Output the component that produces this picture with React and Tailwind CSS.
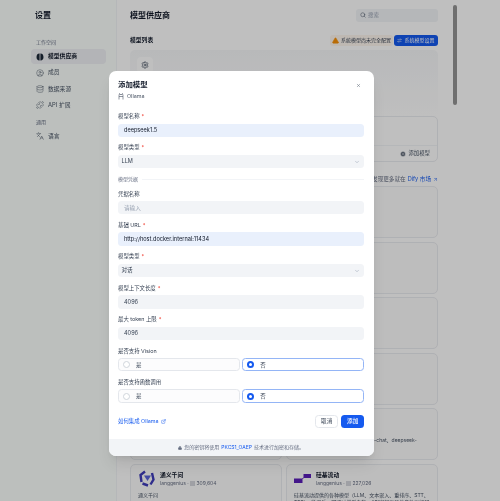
import { CircleUser, Database, Puzzle, Languages, Search, TriangleAlert, ArrowRightLeft, CirclePlus, ArrowUpRight, X, ChevronDown, ExternalLink, Lock, Settings } from "lucide-react";

const font = { fontFamily: '"Inter", "Noto Sans CJK SC", sans-serif' };

function BrainFill({ size }) {
  return (
    <svg width={size} height={size} viewBox="0 0 8 8" fill="#1d2939">
      <path d="M3.6 0.6C2 0.4 0.6 1.6 0.5 4s1.5 3.6 3.1 3.4zM4.4 0.6C6 0.4 7.4 1.6 7.5 4S6 7.6 4.4 7.4z" />
    </svg>
  );
}

function NavItem({ icon: Icon, label, active }) {
  return (
    <div className={`flex items-center gap-[4px] h-[15px] pl-[5px] rounded-[4px] text-[5.8px] ${active ? "bg-[#eff0f4] text-[#101828] font-semibold" : "text-[#495464]"}`}>
      <Icon size={8} strokeWidth={1.4} />
      <span>{label}</span>
    </div>
  );
}

// 弹窗后面的卡片大多被挡住，只保留露出来的内容
function PluginCard({ title, count, desc, icon }) {
  return (
    <div className="h-[52px] rounded-[5px] border border-[#eaecf0] bg-[#fcfcfd] pl-[7px] pr-[6px] pt-[6px] overflow-hidden">
      <div className="flex items-center gap-[5px] h-[16px]">
        <div className="w-[17px] h-[16px] shrink-0 flex items-center justify-center">{icon}</div>
        {title && (
          <div>
            <div className="text-[5.8px] font-semibold text-[#101828] leading-[8px]">{title}</div>
            <div className="text-[5px] text-[#676f83] leading-[8px]">langgenius · ▤ {count}</div>
          </div>
        )}
      </div>
      {desc && <div className="mt-[5.5px] text-[5px] leading-[7px] text-[#495464]">{desc}</div>}
    </div>
  );
}

function Field({ label, required, children }) {
  return (
    <div className="mb-[7.5px]">
      <div className="h-[7px] leading-[7px] mb-[3.5px] text-[5.4px] flex gap-[2px] text-[#354052]">
        <span>{label}</span>
        {required && <span className="text-[#f04438]">*</span>}
      </div>
      {children}
    </div>
  );
}

function Input({ value, blue, muted }) {
  const tone = blue ? "bg-[#e9f0fc] text-[#101828]" : muted ? "bg-[#f2f4f7] text-[#98a2b2]" : "bg-[#f2f4f7] text-[#354052]";
  return (
    <div className={`h-[13.4px] rounded-[3.5px] pl-[6px] flex items-center text-[5.6px] ${tone}`}>
      {value}
    </div>
  );
}

function SelectBox({ value }) {
  return (
    <div className="h-[13.4px] rounded-[3.5px] pl-[3.5px] pr-[4px] flex items-center justify-between bg-[#f2f4f7] text-[5.6px] text-[#354052]">
      {value}
      <ChevronDown size={6} className="text-[#98a2b2]" />
    </div>
  );
}

function Radios() {
  return (
    <div className="grid grid-cols-2 gap-[2.5px]">
      <div className="h-[13.4px] rounded-[3.5px] border-[0.5px] border-[#e4e7ec] bg-[#fcfcfd] flex items-center pl-[4px] gap-[6px] text-[5.4px] text-[#495464]">
        <span className="w-[7px] h-[7px] rounded-full border-[0.5px] border-[#d0d5dc] bg-white" />
        是
      </div>
      <div className="h-[13.4px] rounded-[3.5px] border border-[#94b5f6] bg-white flex items-center pl-[4px] gap-[6px] text-[5.4px] text-[#354052]">
        <span className="w-[7px] h-[7px] rounded-full border-[2px] border-[#155aef] bg-white" />
        否
      </div>
    </div>
  );
}

const hiddenCards = [0, 1, 2, 3, 4, 5, 6, 7, 8];

export default function App() {
  return (
    <div className="relative w-[500px] h-[501px] overflow-hidden bg-white flex blur-[0.35px]" style={font}>
      {/* 侧边栏 */}
      <aside className="w-[117px] shrink-0 h-full bg-[#fbfffd] border-r border-[#f2f4f7] pl-[31px] pr-[10px]">
        <div className="pt-[10px] pl-[4px] h-[38px] text-[8px] font-semibold text-[#101828] leading-[10px]">设置</div>
        <div className="pl-[5px] h-[11px] text-[5px] text-[#676f83] leading-[9px]">工作空间</div>
        <NavItem icon={BrainFill} label="模型供应商" active />
        <div className="mt-[1.3px] flex flex-col gap-[1.3px]">
          <NavItem icon={CircleUser} label="成员" />
          <NavItem icon={Database} label="数据来源" />
          <NavItem icon={Puzzle} label="API 扩展" />
        </div>
        <div className="pl-[5px] mt-[6px] mb-[3px] h-[7px] text-[5px] text-[#676f83] leading-[7px]">通用</div>
        <NavItem icon={Languages} label="语言" />
      </aside>

      {/* 主内容 */}
      <main className="flex-1 min-w-0 pl-[13px] pr-[62px]">
        <div className="h-[31px] flex items-center justify-between pb-[1px]">
          <span className="text-[8px] font-semibold text-[#101828]">模型供应商</span>
          <div className="w-[82px] h-[13px] rounded-[3px] bg-[#f2f4f7] flex items-center pl-[4px] gap-[2px] text-[5.5px] text-[#98a2b2]">
            <Search size={6} className="text-[#495464]" />
            搜索
          </div>
        </div>
        <div className="h-[19px] flex items-center justify-between">
          <span className="text-[5.8px] font-semibold text-[#101828]">模型列表</span>
          <div className="flex items-center gap-[1px]">
            <div className="h-[11.5px] px-[2px] rounded-[3px] bg-[#fef6ee] flex items-center gap-[2px] text-[5px] text-[#354052]">
              <TriangleAlert size={7} className="text-[#f79009] fill-[#f79009]" />
              系统模型尚未完全配置
            </div>
            <div className="h-[11.5px] w-[44px] justify-center rounded-[3px] bg-[#155aef] flex items-center gap-[2px] text-[5px] text-white">
              <ArrowRightLeft size={5} />
              系统模型设置
            </div>
          </div>
        </div>
        <div className="h-[66px] rounded-t-[5px] bg-gradient-to-b from-[#f6f7f9] to-white p-[7px]">
          <div className="w-[16px] h-[16px] rounded-[4px] bg-white flex items-center justify-center">
            <Settings size={8} strokeWidth={2.2} className="text-[#495464]" />
          </div>
        </div>
        <div className="h-[46px] rounded-[5px] border border-[#eaecf0] bg-white flex flex-col justify-end">
          <div className="h-[16px] border-t border-[#f2f4f7] flex items-center justify-end pr-[7px] gap-[2px] text-[5.4px] text-[#495464]">
            <CirclePlus size={6} className="fill-[#495464] text-white" />
            添加模型
          </div>
        </div>
        <div className="h-[24px] flex items-center justify-end text-[5.6px] text-[#676f83] gap-[2px] pt-[10px]">
          <span>发现更多就在</span>
          <span className="text-[#155aef]">Dify 市场</span>
          <ArrowUpRight size={5} className="text-[#155aef]" />
        </div>
        <div className="grid grid-cols-2 gap-x-[4px] gap-y-[3.5px]">
          {hiddenCards.map((i) => (
            <PluginCard key={i} />
          ))}
          <PluginCard desc="DeepSeek 提供模型例如 deepseek-chat、deepseek-coder。" />
          <PluginCard
            title="通义千问"
            count="309,604"
            desc="通义千问"
            icon={
              <svg width="16" height="17" viewBox="0 0 16 17" fill="none">
                <path d="M6 1.5 1.5 5l1 7M13 3l1.5 6.5-3 5M3.5 13.5 9 15.5" stroke="#3f3cbb" strokeWidth="2.4" />
                <path d="M5 5.5h7L8.5 11z" fill="#5a63d8" />
              </svg>
            }
          />
          <PluginCard
            title="硅基流动"
            count="227,026"
            desc="硅基流动提供的各种模型（LLM、文本嵌入、重排序、STT、TTS），微调后，可通过模型名称、API密钥和其他参数进行配置。"
            icon={
              <svg width="17" height="9" viewBox="0 0 17 9">
                <path d="M0 4.5h8L9.5 3.5V0H17v4H10L8.5 5V9H0z" fill="#5a1eb8" />
              </svg>
            }
          />
        </div>
      </main>

      {/* 滚动条 */}
      <div className="absolute right-[43px] top-[5px] w-[4px] h-[100px] rounded-full bg-[#959595]" />

      {/* 遮罩 */}
      <div className="absolute inset-0 bg-black/25" />

      {/* 弹窗 */}
      <div className="absolute left-[108.5px] top-[71px] w-[265.2px] h-[385px] rounded-[7px] bg-white shadow-lg overflow-hidden flex flex-col">
        <div className="flex-1 px-[9.5px] pt-[9px]">
          <div className="flex items-start justify-between">
            <div className="text-[7.4px] font-semibold text-[#101828] leading-[10px]">添加模型</div>
            <X size={5} className="mt-[3px] mr-[3px] text-[#495464]" />
          </div>
          <div className="flex items-center gap-[3px] mt-[2.5px] h-[8px] text-[5.4px] text-[#495464]">
            <svg width="6" height="7" viewBox="0 0 12 14" fill="none" stroke="#495464" strokeWidth="1.2">
              <path d="M2 13V5l1-4 1 2h4l1-2 1 4v8M2 7h8" />
            </svg>
            Ollama
          </div>
          <div className="mt-[12.5px]">
            <Field label="模型名称" required><Input value="deepseek1.5" blue /></Field>
            <Field label="模型类型" required><SelectBox value="LLM" /></Field>
            <div className="flex items-center gap-[4px] h-[7px] mt-[2.6px] mb-[7.8px] text-[5px] text-[#676f83]">
              <span>模型凭据</span>
              <div className="flex-1 h-px bg-[#f2f4f7]" />
            </div>
            <Field label="凭据名称"><Input value="请输入" muted /></Field>
            <Field label="基础 URL" required><Input value="http://host.docker.internal:11434" blue /></Field>
            <Field label="模型类型" required><SelectBox value="对话" /></Field>
            <Field label="模型上下文长度" required><Input value="4096" /></Field>
            <Field label="最大 token 上限" required><Input value="4096" /></Field>
            <Field label="是否支持 Vision"><Radios /></Field>
            <Field label="是否支持函数调用"><Radios /></Field>
          </div>
          <div className="flex items-center justify-between mt-[12px]">
            <div className="flex items-center gap-[2px] text-[5.4px] text-[#155aef]">
              如何集成 Ollama
              <ExternalLink size={5} />
            </div>
            <div className="flex gap-[3px]">
              <div className="w-[23px] h-[13.4px] rounded-[3.5px] border border-[#e4e7ec] flex items-center justify-center text-[5.6px] text-[#354052]">取消</div>
              <div className="w-[23px] h-[13.4px] rounded-[3.5px] bg-[#155aef] flex items-center justify-center text-[5.6px] text-white font-medium">添加</div>
            </div>
          </div>
        </div>
        <div className="h-[17px] bg-[#f2f4f7] flex items-center justify-center gap-[2px] text-[5px] text-[#676f83]">
          <Lock size={4} className="fill-[#676f83]" />
          <span>您的密钥将使用</span>
          <span className="text-[#155aef]">PKCS1_OAEP</span>
          <span>技术进行加密和存储。</span>
        </div>
      </div>
    </div>
  );
}
